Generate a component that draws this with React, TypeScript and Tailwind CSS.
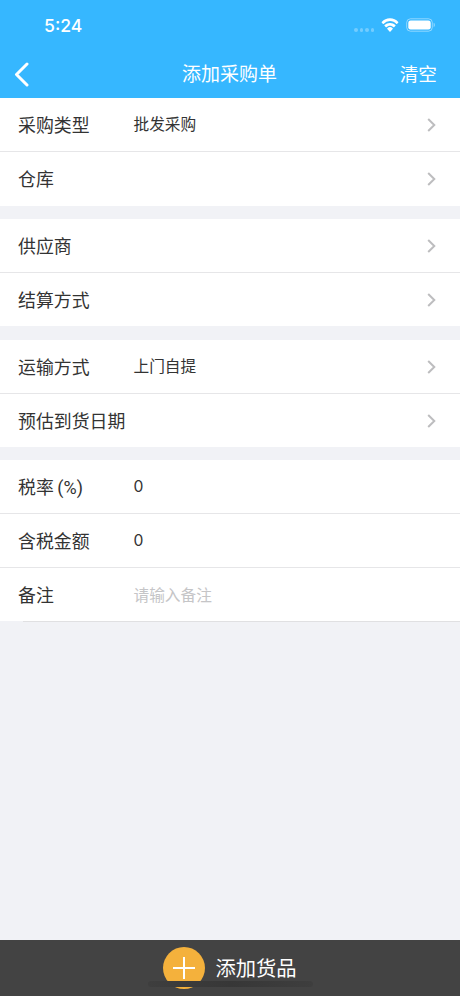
type RowData = {
  label: string;
  unit?: string;
  value?: string;
  placeholder?: string;
  arrow?: boolean;
};

const groups: { rows: RowData[]; size: string }[] = [
  {
    size: "h-[108px] mb-[13px]",
    rows: [
      { label: "采购类型", value: "批发采购", arrow: true },
      { label: "仓库", arrow: true },
    ],
  },
  {
    size: "h-[107px] mb-[14px]",
    rows: [
      { label: "供应商", arrow: true },
      { label: "结算方式", arrow: true },
    ],
  },
  {
    size: "h-[107px] mb-[13px]",
    rows: [
      { label: "运输方式", value: "上门自提", arrow: true },
      { label: "预估到货日期", arrow: true },
    ],
  },
  {
    size: "h-[161px]",
    rows: [
      { label: "税率", unit: "(%)", value: "0" },
      { label: "含税金额", value: "0" },
      { label: "备注", placeholder: "请输入备注" },
    ],
  },
];

function Row({ row, last }: { row: RowData; last: boolean }) {
  return (
    <div
      className={
        "flex h-[54px] shrink-0 items-center pl-[18px] pr-6 " +
        (last ? "" : "border-b border-[#e6e6e8]")
      }
    >
      <span className="flex w-[115.5px] shrink-0 whitespace-nowrap pt-[2px] text-[17.9px] leading-6 text-[#333]">
        {row.label}
        {row.unit && (
          <span className="ml-[3.5px] font-['Roboto',sans-serif] text-[18px]">{row.unit}</span>
        )}
      </span>
      <span
        className={
          "flex-1 pt-px text-[15.7px] leading-6 " +
          (row.placeholder ? "text-[#c5c5c7]" : "text-[#333]")
        }
      >
        {row.value ?? row.placeholder}
      </span>
      {row.arrow && (
        <svg width="9" height="14" viewBox="0 0 9 14" fill="none" stroke="#bdbdbf" strokeWidth="2">
          <path d="M1.2 1 7.3 7 1.2 13" />
        </svg>
      )}
    </div>
  );
}

export default function App() {
  return (
    <div className="flex h-[996px] w-[460px] flex-col overflow-hidden bg-[#f1f2f6] font-['Inter','Noto_Sans_CJK_SC',sans-serif]">
      <header className="flex h-[98px] shrink-0 flex-col bg-[#36b7ff] text-white">
        <div className="flex h-[50px] items-center justify-between pl-[44px] pr-[24px]">
          <span className="pt-px text-[17.6px] font-medium leading-6">5:24</span>
          <div className="flex items-center">
            <div className="mr-[7px] mt-[10px] flex gap-[2px] opacity-30">
              <i className="h-[3.5px] w-[3.5px] rounded-full bg-white" />
              <i className="h-[3.5px] w-[3.5px] rounded-full bg-white" />
              <i className="h-[3.5px] w-[3.5px] rounded-full bg-white" />
              <i className="h-[3.5px] w-[3.5px] rounded-full bg-white" />
            </div>
            <svg width="18" height="14" viewBox="0 0 18 12.6" preserveAspectRatio="none" fill="white">
              <path d="M9 2.8c2.5 0 4.8 1 6.5 2.6.2.1.4.1.5 0l1.3-1.3c.2-.2.2-.4 0-.6A12 12 0 0 0 9 .3 12 12 0 0 0 .7 3.5c-.2.2-.2.4 0 .6L2 5.4c.1.1.3.1.5 0A9.4 9.4 0 0 1 9 2.8Z" />
              <path d="M9 7c1.4 0 2.7.5 3.6 1.4.2.1.4.1.5 0l1.4-1.4c.1-.2.1-.4 0-.6A8 8 0 0 0 9 4.4a8 8 0 0 0-5.5 2c-.1.2-.1.4 0 .6l1.4 1.4c.1.1.3.1.5 0C6.3 7.5 7.6 7 9 7Z" />
              <path d="M11.7 9.8c.2-.2.2-.4 0-.6a4.3 4.3 0 0 0-5.4 0c-.2.2-.2.4 0 .6l2.4 2.5c.2.1.4.1.6 0Z" />
            </svg>
            <svg className="ml-[7px]" width="30" height="14" viewBox="0 0 30 14" fill="none">
              <rect x=".7" y=".8" width="25.6" height="12.4" rx="3.8" stroke="white" strokeOpacity=".45" />
              <rect x="2.3" y="2.4" width="22.4" height="9.2" rx="2.3" fill="white" />
              <path d="M27.7 4.8c1.5.6 1.5 3.8 0 4.4Z" fill="white" fillOpacity=".5" />
            </svg>
          </div>
        </div>
        <div className="grid h-12 grid-cols-[1fr_auto_1fr] items-center px-[14px]">
          <svg width="16" height="25" viewBox="0 0 16 25" fill="none" stroke="white" strokeWidth="3">
            <path d="M13 2 2.5 12.5 13 23" strokeLinecap="round" strokeLinejoin="round" />
          </svg>
          <h1 className="pr-px pt-[2px] text-[19px] font-normal leading-7">添加采购单</h1>
          <button className="mr-[9px] justify-self-end pt-[2px] text-[18.7px] leading-7">清空</button>
        </div>
      </header>

      <main className="flex-1">
        {groups.map((group, g) => (
          <section key={g} className={"overflow-hidden bg-white " + group.size}>
            {group.rows.map((row, i) => (
              <Row key={row.label} row={row} last={i === group.rows.length - 1} />
            ))}
          </section>
        ))}
        <div className="ml-[23px] h-px bg-[#e0e0e2]" />
      </main>

      <footer className="relative flex h-[56px] shrink-0 items-center justify-center bg-[#434343] text-white">
        <span className="flex h-[42px] w-[42px] items-center justify-center rounded-full bg-[#f4b13c]">
          <svg width="22" height="22" viewBox="0 0 22 22" stroke="white" strokeWidth="2">
            <path d="M11 0v22M0 11h22" />
          </svg>
        </span>
        <span className="ml-[10px] pt-[2px] text-[20.3px] leading-7">添加货品</span>
        <div className="absolute bottom-[9px] left-[148px] h-[6px] w-[165px] rounded-full bg-linear-to-r from-[#3e3e3e] via-[#373737] to-[#3e3e3e]" />
      </footer>
    </div>
  );
}
